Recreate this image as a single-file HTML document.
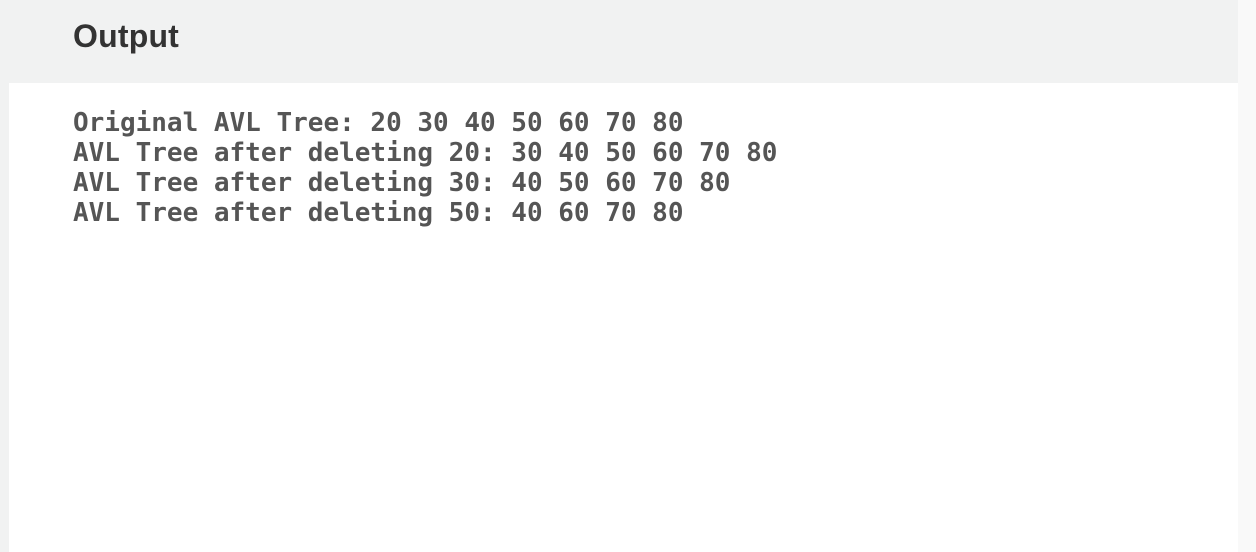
<!DOCTYPE html>
<html><head><style>
html,body{margin:0;padding:0;width:1256px;height:552px;overflow:hidden;background:#f9f9f9;}
.hdr{position:absolute;left:0;top:0;width:1238px;height:83px;background:#f1f2f2;}
.hdr span{position:absolute;left:73px;top:18px;font:bold 32px "Liberation Sans",sans-serif;color:#333;letter-spacing:0.2px}
.left{position:absolute;left:0;top:83px;width:9px;height:469px;background:#f1f2f2;}
.panel{position:absolute;left:9px;top:83px;width:1229px;height:469px;background:#fff;}
pre{position:absolute;left:73px;top:108px;margin:0;font:bold 26px/30px "DejaVu Sans Mono",monospace;color:#555;}
</style></head><body>
<div class="hdr"><span>Output</span></div>
<div class="left"></div>
<div class="panel"></div>
<pre>Original AVL Tree: 20 30 40 50 60 70 80
AVL Tree after deleting 20: 30 40 50 60 70 80
AVL Tree after deleting 30: 40 50 60 70 80
AVL Tree after deleting 50: 40 60 70 80</pre>
</body></html>
